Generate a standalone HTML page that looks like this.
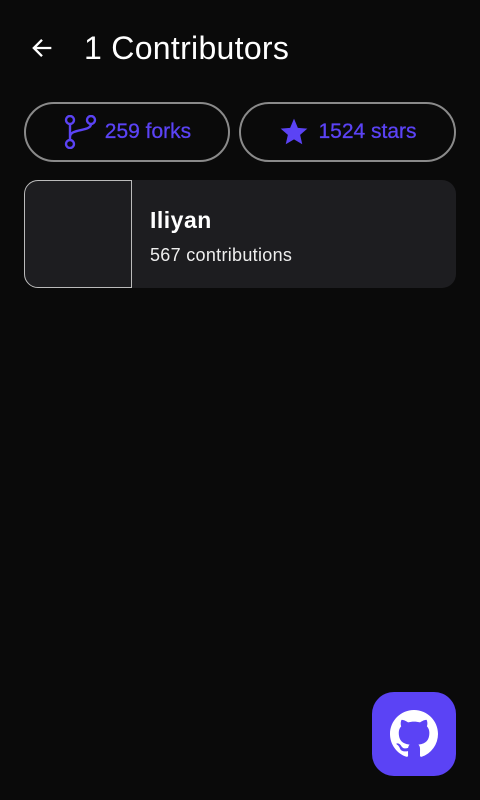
<!DOCTYPE html>
<html><head><meta charset="utf-8"><style>
html,body{margin:0;padding:0;background:#0a0a0a;width:480px;height:800px;overflow:hidden;font-family:"Liberation Sans",sans-serif;color:#fff}
.title{position:absolute;left:84px;top:28px;font-size:32px;line-height:40px;letter-spacing:0.3px}
.back{position:absolute;left:28px;top:34px}
.pill{position:absolute;top:102px;height:60px;border:2px solid #8a8a8a;border-radius:30px;box-sizing:border-box;display:flex;align-items:center;justify-content:center;color:#5b43f5;font-size:21px;font-weight:500;-webkit-text-stroke:0.3px #5b43f5}
.card{position:absolute;left:24px;top:180px;width:432px;height:108px;background:#1d1d20;border-radius:14px}
.av{position:absolute;left:24px;top:180px;width:108px;height:108px;box-sizing:border-box;border:1px solid #bbb;border-radius:14px 0 0 14px;background:#1d1d20}
.name{position:absolute;left:150px;top:207px;font-size:23px;font-weight:bold;letter-spacing:.5px}
.sub{position:absolute;left:150px;top:245px;font-size:18px;letter-spacing:.3px;color:#eee}
.fab{position:absolute;left:372px;top:692px;width:84px;height:84px;border-radius:22px;background:#5b43f5;display:flex;align-items:center;justify-content:center}
</style></head><body>
<svg class="back" width="28" height="28" viewBox="0 0 24 24"><path d="M20 12H5M12 5l-7 7 7 7" stroke="#fff" stroke-width="2" fill="none"/></svg>
<div class="title">1 Contributors</div>
<div class="pill" style="left:24px;width:206px"><svg width="34" height="34" viewBox="0 0 34 34" style="margin-right:8px"><g stroke="#5b43f5" stroke-width="2.4" fill="none"><circle cx="7" cy="5" r="4"/><circle cx="7" cy="29" r="4"/><circle cx="28" cy="5" r="4"/><path d="M7 9v16M28 9c0 8-21 4-21 13"/></g></svg>259 forks</div>
<div class="pill" style="left:239px;width:217px"><svg width="32" height="32" viewBox="0 0 24 24" style="margin-right:8px"><path fill="#5b43f5" d="M12 2l2.9 6.9 7.1.6-5.4 4.7 1.6 7L12 17.5 5.8 21.2l1.6-7L2 9.5l7.1-.6z"/></svg>1524 stars</div>
<div class="card"></div><div class="av"></div>
<div class="name">Iliyan</div>
<div class="sub">567 contributions</div>
<div class="fab"><svg width="48" height="48" viewBox="0 0 16 16"><path fill="#fff" d="M8 0C3.58 0 0 3.580 0 8c0 3.54 2.29 6.53 5.47 7.59.4.07.55-.17.55-.38 0-.19-.01-.82-.01-1.49-2.01.37-2.53-.49-2.690-.94-.09-.23-.48-.94-.82-1.13-.28-.15-.68-.52-.01-.53.63-.01 1.08.58 1.23.82.72 1.21 1.87.87 2.33.66.07-.52.28-.87.51-1.07-1.78-.2-3.64-.89-3.64-3.95 0-.87.31-1.59.82-2.15-.08-.2-.36-1.02.08-2.12 0 0 .67-.21 2.2.82.64-.18 1.32-.27 2-.27.68 0 1.36.09 2 .27 1.53-1.04 2.2-.82 2.2-.82.44 1.1.16 1.92.08 2.12.51.56.82 1.27.82 2.15 0 3.07-1.87 3.75-3.65 3.950.29.25.54.73.54 1.48 0 1.07-.01 1.93-.01 2.2 0 .21.15.46.55.38A8.013 8.013 0 0016 8c0-4.42-3.58-8-8-8z"/></svg></div>
</body></html>
